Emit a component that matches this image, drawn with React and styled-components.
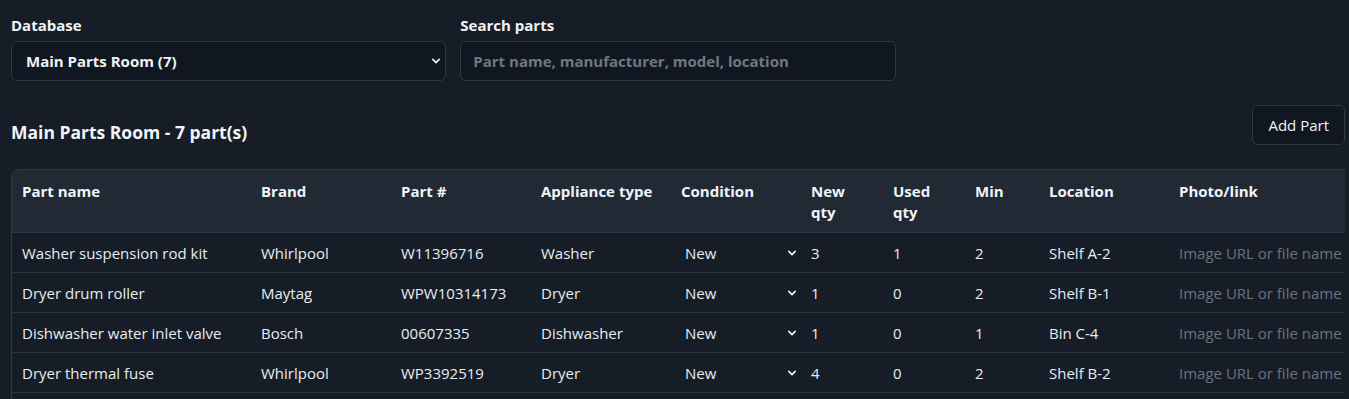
import React from "react";
import styled, { createGlobalStyle } from "styled-components";

const Global = createGlobalStyle`
  html, body { margin: 0; padding: 0; background: #171d27; }
  body { font-family: "Open Sans", "Noto Sans", sans-serif; color: #e6edf3; }
  * { box-sizing: border-box; }
`;

const Page = styled.div`
  padding: 15px 4px 0 11px;
  overflow: hidden;
  height: 399px;
`;

const Filters = styled.div`
  display: grid;
  grid-template-columns: repeat(3, 1fr);
  gap: 14px;
`;

const Field = styled.label`
  display: flex;
  flex-direction: column;
  gap: 6px;
`;

const Label = styled.span`
  font-size: 15px;
  font-weight: 700;
  line-height: 20px;
  color: #f0f4f8;
`;

const Control = styled.div`
  height: 40px;
  border: 1px solid #2e3744;
  border-radius: 6px;
  background: #111720;
  display: flex;
  align-items: center;
  padding: 0 4px 0 14px;
  font-size: 15px;
  font-weight: 700;
`;

const SearchInput = styled.input`
  height: 40px;
  border: 1px solid #2e3744;
  border-radius: 6px;
  background: #111720;
  padding: 0 12px;
  font-family: inherit;
  font-size: 15px;
  font-weight: 700;
  color: #eef2f6;
  outline: none;
  &::placeholder { color: #6f7782; }
`;

const ControlText = styled.span`
  color: #eef2f6;
  flex: 1;
`;

const Chevron = ({ size = 10, color = "#e6edf3" }) => (
  <svg width={size} height={size} viewBox="0 0 10 10" fill="none">
    <path d="M1.8 3.4 L5 6.6 L8.2 3.4" stroke={color} strokeWidth="1.7" strokeLinecap="round" strokeLinejoin="round" />
  </svg>
);

const TitleRow = styled.div`
  display: flex;
  justify-content: space-between;
  align-items: flex-start;
  margin-top: 24px;
`;

const Title = styled.h2`
  margin: 15px 0 0;
  font-size: 17.5px;
  font-weight: 700;
  line-height: 24px;
  color: #f0f4f8;
`;

const Button = styled.button`
  height: 40px;
  padding: 0 15px;
  border: 1px solid #2e3744;
  border-radius: 6px;
  background: #111720;
  color: #eef2f6;
  font-family: inherit;
  font-size: 15px;
`;

const TableWrap = styled.div`
  margin-top: 24px;
  border: 1px solid #2e3744;
  border-right: none;
  border-radius: 8px 0 0 0;
  overflow: hidden;
`;

const Table = styled.table`
  border-collapse: collapse;
  table-layout: fixed;
  width: 1360px;
`;

const Th = styled.th`
  text-align: left;
  vertical-align: top;
  padding: 11px 10px 9px;
  font-size: 15px;
  font-weight: 700;
  line-height: 21px;
  background: #212935;
  color: #f0f4f8;
  border-bottom: 1px solid #2e3744;
`;

const Td = styled.td`
  height: 40px;
  padding: ${(p) => (p.$tight ? "0 4px" : "0 10px")};
  font-size: 15px;
  line-height: 20px;
  color: #e6edf3;
  border-bottom: 1px solid #2a3340;
  white-space: nowrap;
  overflow: hidden;
`;

const CellSelect = styled.div`
  display: flex;
  align-items: center;
  justify-content: space-between;
  padding-left: 10px;
`;

const LinkInput = styled.input`
  width: 100%;
  border: none;
  background: transparent;
  padding: 0;
  font-family: inherit;
  font-size: 15px;
  color: #e6edf3;
  outline: none;
  &::placeholder { color: #6b737e; }
`;

const cols = [239, 140, 140, 140, 130, 82, 82, 74, 130, 203];
const heads = ["Part name", "Brand", "Part #", "Appliance type", "Condition", "New qty", "Used qty", "Min", "Location", "Photo/link"];

const rows = [
  ["Washer suspension rod kit", "Whirlpool", "W11396716", "Washer", "New", "3", "1", "2", "Shelf A-2"],
  ["Dryer drum roller", "Maytag", "WPW10314173", "Dryer", "New", "1", "0", "2", "Shelf B-1"],
  ["Dishwasher water inlet valve", "Bosch", "00607335", "Dishwasher", "New", "1", "0", "1", "Bin C-4"],
  ["Dryer thermal fuse", "Whirlpool", "WP3392519", "Dryer", "New", "4", "0", "2", "Shelf B-2"],
];

export default function App() {
  return (
    <>
      <Global />
      <Page>
        <Filters>
          <Field>
            <Label>Database</Label>
            <Control>
              <ControlText>Main Parts Room (7)</ControlText>
              <Chevron />
            </Control>
          </Field>
          <Field>
            <Label>Search parts</Label>
            <SearchInput placeholder="Part name, manufacturer, model, location" />
          </Field>
        </Filters>
        <TitleRow>
          <Title>Main Parts Room - 7 part(s)</Title>
          <Button>Add Part</Button>
        </TitleRow>
        <TableWrap>
          <Table>
            <colgroup>
              {cols.map((w, i) => (
                <col key={i} style={{ width: w }} />
              ))}
            </colgroup>
            <thead>
              <tr>
                {heads.map((h) => (
                  <Th key={h}>{h.includes(" qty") ? <>{h.split(" ")[0]}<br />qty</> : h}</Th>
                ))}
              </tr>
            </thead>
            <tbody>
              {rows.map((r) => (
                <tr key={r[0]}>
                  <Td>{r[0]}</Td>
                  <Td>{r[1]}</Td>
                  <Td>{r[2]}</Td>
                  <Td>{r[3]}</Td>
                  <Td $tight>
                    <CellSelect>
                      {r[4]}
                      <Chevron size={10} />
                    </CellSelect>
                  </Td>
                  <Td>{r[5]}</Td>
                  <Td>{r[6]}</Td>
                  <Td>{r[7]}</Td>
                  <Td>{r[8]}</Td>
                  <Td>
                    <LinkInput placeholder="Image URL or file name" />
                  </Td>
                </tr>
              ))}
              <tr>
                <Td colSpan={10} />
              </tr>
            </tbody>
          </Table>
        </TableWrap>
      </Page>
    </>
  );
}
